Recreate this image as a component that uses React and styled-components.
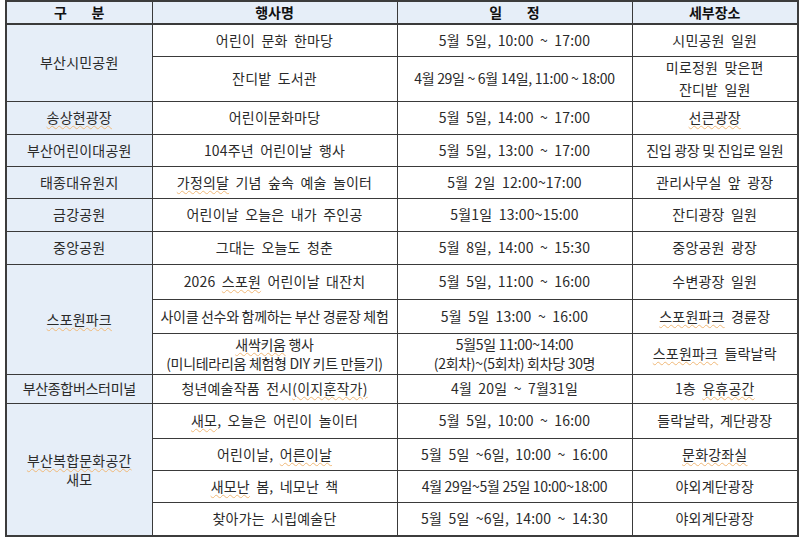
import styled, { createGlobalStyle } from "styled-components";

const GlobalStyle = createGlobalStyle`
  html, body {
    margin: 0;
    padding: 0;
    background: #ffffff;
  }
  body {
    font-family: "Noto Sans CJK KR", "Noto Sans", sans-serif;
    color: #2a2a2a;
  }
`;

const Page = styled.div`
  padding: 0 3px 0 5px;
  width: 800px;
  box-sizing: border-box;
`;

const Table = styled.table`
  width: 792px;
  border-collapse: collapse;
  table-layout: fixed;
  border: 2px solid #3c3c3c;
  font-size: 14px;
  line-height: 17px;
`;

const Row = styled.tr`
  height: ${(p) => p.$h}px;
`;

const Cell = styled.td`
  border: 1px solid #3a3a3a;
  text-align: center;
  vertical-align: middle;
  padding: 0 2px;
  white-space: nowrap;
  background: #ffffff;
  word-spacing: ${(p) => (p.$tight ? 0 : 3)}px;
  letter-spacing: ${(p) => (p.$tight ? -0.3 : 0.2)}px;
`;

const PlaceCell = styled(Cell)`
  background: #e6eef8;
`;

const HeadCell = styled.th`
  border: 1px solid #3a3a3a;
  border-bottom-width: 2px;
  background: #e6eef8;
  font-weight: 700;
  color: #111111;
  text-align: center;
  vertical-align: middle;
  white-space: pre;
  word-spacing: 3px;
  padding: 0;
`;

const Mark = styled.span`
  text-decoration: underline wavy #f0b878;
  text-decoration-thickness: 1px;
  text-underline-offset: 2px;
`;

const Lines = styled.div`
  display: flex;
  flex-direction: column;
  align-items: center;
  line-height: ${(p) => p.$lh || 17}px;
  gap: ${(p) => p.$gap || 0}px;
`;

const cols = [146, 245, 235, 166];

const App = () => {
  return (
    <>
      <GlobalStyle />
      <Page>
        <Table>
          <colgroup>
            {cols.map((w, i) => (
              <col key={i} style={{ width: w }} />
            ))}
          </colgroup>
          <thead>
            <Row $h={23}>
              <HeadCell>{"구    분"}</HeadCell>
              <HeadCell>행사명</HeadCell>
              <HeadCell>{"일    정"}</HeadCell>
              <HeadCell>세부장소</HeadCell>
            </Row>
          </thead>
          <tbody>
            <Row $h={32}>
              <PlaceCell rowSpan={2}>부산시민공원</PlaceCell>
              <Cell>어린이 문화 한마당</Cell>
              <Cell>5월 5일, 10:00 ~ 17:00</Cell>
              <Cell>시민공원 일원</Cell>
            </Row>
            <Row $h={45}>
              <Cell>잔디밭 도서관</Cell>
              <Cell $tight>4월 29일 ~ 6월 14일, 11:00 ~ 18:00</Cell>
              <Cell>
                <Lines $gap={5}>
                  <span>미로정원 맞은편</span>
                  <span>잔디밭 일원</span>
                </Lines>
              </Cell>
            </Row>
            <Row $h={33}>
              <PlaceCell>
                <Mark>송상현광장</Mark>
              </PlaceCell>
              <Cell>어린이문화마당</Cell>
              <Cell>5월 5일, 14:00 ~ 17:00</Cell>
              <Cell>
                <Mark>선큰광장</Mark>
              </Cell>
            </Row>
            <Row $h={32}>
              <PlaceCell>부산어린이대공원</PlaceCell>
              <Cell>104주년 어린이날 행사</Cell>
              <Cell>5월 5일, 13:00 ~ 17:00</Cell>
              <Cell $tight>진입 광장 및 진입로 일원</Cell>
            </Row>
            <Row $h={32}>
              <PlaceCell>태종대유원지</PlaceCell>
              <Cell>
                <Mark>가정의달</Mark> 기념 숲속 예술 놀이터
              </Cell>
              <Cell>5월 2일 12:00~17:00</Cell>
              <Cell>관리사무실 앞 광장</Cell>
            </Row>
            <Row $h={33}>
              <PlaceCell>금강공원</PlaceCell>
              <Cell>어린이날 오늘은 내가 주인공</Cell>
              <Cell>5월1일 13:00~15:00</Cell>
              <Cell>잔디광장 일원</Cell>
            </Row>
            <Row $h={33}>
              <PlaceCell>중앙공원</PlaceCell>
              <Cell>그대는 오늘도 청춘</Cell>
              <Cell>5월 8일, 14:00 ~ 15:30</Cell>
              <Cell>중앙공원 광장</Cell>
            </Row>
            <Row $h={35}>
              <PlaceCell rowSpan={3}>
                <Mark>스포원파크</Mark>
              </PlaceCell>
              <Cell>
                2026 <Mark>스포원</Mark> 어린이날 대잔치
              </Cell>
              <Cell>5월 5일, 11:00 ~ 16:00</Cell>
              <Cell>수변광장 일원</Cell>
            </Row>
            <Row $h={34}>
              <Cell $tight>사이클 선수와 함께하는 부산 경륜장 체험</Cell>
              <Cell>5월 5일 13:00 ~ 16:00</Cell>
              <Cell>
                <Mark>스포원파크</Mark> 경륜장
              </Cell>
            </Row>
            <Row $h={41}>
              <Cell $tight>
                <Lines $lh={19}>
                  <span>
                    <Mark>새싹키움</Mark> 행사
                  </span>
                  <span>(미니테라리움 체험형 DIY 키트 만들기)</span>
                </Lines>
              </Cell>
              <Cell $tight>
                <Lines $lh={19}>
                  <span>5월5일 11:00~14:00</span>
                  <span>(2회차)~(5회차) 회차당 30명</span>
                </Lines>
              </Cell>
              <Cell>
                <Mark>스포원파크</Mark> 들락날락
              </Cell>
            </Row>
            <Row $h={29}>
              <PlaceCell $tight>부산종합버스터미널</PlaceCell>
              <Cell>
                청년예술작품 전시<Mark>(이지훈작가)</Mark>
              </Cell>
              <Cell>4월 20일 ~ 7월31일</Cell>
              <Cell>
                1층 <Mark>유휴공간</Mark>
              </Cell>
            </Row>
            <Row $h={35}>
              <PlaceCell rowSpan={4}>
                <Lines $lh={18} $gap={1}>
                  <Mark>부산복합문화공간</Mark>
                  <span>새모</span>
                </Lines>
              </PlaceCell>
              <Cell>
                <Mark>새모</Mark>, 오늘은 어린이 놀이터
              </Cell>
              <Cell>5월 5일, 10:00 ~ 16:00</Cell>
              <Cell>들락날락, 계단광장</Cell>
            </Row>
            <Row $h={32}>
              <Cell>
                어린이날, <Mark>어른이날</Mark>
              </Cell>
              <Cell>5월 5일 ~6일, 10:00 ~ 16:00</Cell>
              <Cell>
                <Mark>문화강좌실</Mark>
              </Cell>
            </Row>
            <Row $h={32}>
              <Cell>
                <Mark>새모난</Mark> 봄, 네모난 책
              </Cell>
              <Cell $tight>4월 29일~5월 25일 10:00~18:00</Cell>
              <Cell>야외계단광장</Cell>
            </Row>
            <Row $h={34}>
              <Cell>찾아가는 시립예술단</Cell>
              <Cell>5월 5일 ~6일, 14:00 ~ 14:30</Cell>
              <Cell>야외계단광장</Cell>
            </Row>
          </tbody>
        </Table>
      </Page>
    </>
  );
};

export default App;
